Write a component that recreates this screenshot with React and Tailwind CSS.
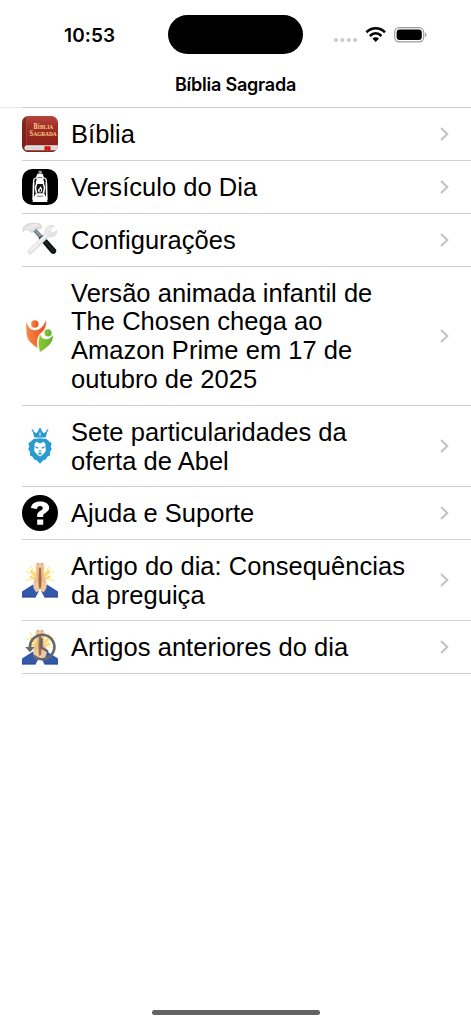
import React from "react";

function BibleIcon() {
  return (
    <svg viewBox="0 0 36 36" className="size-9 overflow-visible">
      <defs>
        <linearGradient id="cover" x1="0" y1="0" x2="0" y2="1">
          <stop offset="0" stopColor="#b5463b" />
          <stop offset="0.3" stopColor="#a02e25" />
          <stop offset="1" stopColor="#861c16" />
        </linearGradient>
        <clipPath id="bookClip"><rect width="36" height="36" rx="6.5" /></clipPath>
      </defs>
      <g clipPath="url(#bookClip)">
        <rect width="36" height="36" fill="url(#cover)" />
        <rect width="4.5" height="36" fill="#702018" opacity="0.65" />
        <path d="M4.5 0v29" stroke="#b65a4d" strokeWidth="0.5" />
        <path d="M5 29.3H36V34.5H5C1.5 34.5 1.5 29.3 5 29.3Z" fill="#e3e3e3" />
        <path d="M4 31.5H36M4 33H36" stroke="#c4c6c7" strokeWidth="0.6" />
        <path d="M22.5 30.2h6v4.8l-3-1.2-3 1.2Z" fill="#d3100d" />
        <path d="M2 35.2H35" stroke="#8b201a" strokeWidth="1.4" />
      </g>
      <g fill="#f6d28b" fontFamily="Liberation Serif, serif" fontWeight="700">
        <text x="11.6" y="13" fontSize="7.4" textLength="19.6" lengthAdjust="spacingAndGlyphs">B<tspan fontSize="6.4">ÍBLIA</tspan></text>
        <text x="7.6" y="20.2" fontSize="7.8" textLength="27" lengthAdjust="spacingAndGlyphs">S<tspan fontSize="6.4">AGRADA</tspan></text>
      </g>
    </svg>
  );
}

function LanternIcon() {
  return (
    <svg viewBox="0 0 36 36" className="size-9">
      <rect width="36" height="36" rx="10.5" />
      <g fill="none" stroke="#fff" strokeLinecap="round">
        <circle cx="18" cy="3.2" r="1.2" strokeWidth="0.8" />
        <path d="M11.6 14 11.2 30M24.4 14 24.8 30" strokeWidth="1.7" />
        <path d="M11.7 14C11 10.5 12.6 9 14.6 8.8M24.3 14C25 10.5 23.4 9 21.4 8.8" strokeWidth="1.3" />
      </g>
      <path d="M15.4 4.8h5.2l1.4 3.4-.8 1.4 1.3 4.4h-9L14.8 9.6l-.8-1.4Z" fill="#fff" />
      <path d="M14.2 13.6h7.6l1.5 5-1 5.8h-8.6l-1-5.8Z" fill="#fff" />
      <path d="M15.3 15h5.4l1.1 4-1.2 5h-5.2l-1.2-5Z" fill="#151515" />
      <path d="M18.3 17.3c2.5 2.2 2.6 5.8-.2 6.2-2.8-.4-2.6-3.2-.6-4.3Z" fill="#fff" />
      <path d="M18.4 19.8c1.2 1.8.6 2.7-.3 2.9-1.2-.5-.7-1.6.3-2.9Z" fill="#000" />
      <path d="M13.8 24.4h8.4l1.5 3 1.6 2v3.6H10.7v-3.6l1.6-2Z" fill="#fff" />
      <path d="M14.8 27.2h6.4M15.6 8.6h4.8" stroke="#333" strokeWidth="0.7" />
    </svg>
  );
}

function ToolsIcon() {
  return (
    <svg viewBox="0 0 36 36" className="size-9">
      <defs>
        <linearGradient id="metal" x1="0" y1="0" x2="1" y2="1">
          <stop offset="0" stopColor="#cfd1d2" />
          <stop offset="0.4" stopColor="#ececed" />
          <stop offset="1" stopColor="#d0d1d2" />
        </linearGradient>
      </defs>
      <path d="M10.5 8 14 6 22.5 16 18.5 18Z" fill="#8795a1" />
      <path d="M11 8.4 19.2 17.6" stroke="#5c6771" strokeWidth="0.9" />
      <path d="M16.6 16.3 21 13 33.8 27.2Q35.4 29.3 33.4 31.3Q31 33 28.8 30.8Z" fill="#111718" />
      <path d="M20.4 16.4 31 28.3" stroke="#3c4042" strokeWidth="0.8" />
      <path d="M.8 6.3C3.8 1.6 9.9.2 17.8 2L20 4.3 18 7.2C15.7 5.7 14.2 6.2 12.8 8.1L9.9 10.8 6.6 7.6C4 6.6 2.6 8 1.4 9.6Z" fill="url(#metal)" stroke="#b4b6b8" strokeWidth="0.5" />
      <path d="M26 4.4C28 3 30.5 3 32.5 4.4L28.6 6 28.4 9.4 31.4 11 34.8 8.2C35.4 12.6 31.4 15.6 26.8 14.8L10.3 31C7.8 33.4 4.3 30.8 6.8 27.9L23 11.8C22.4 8.6 23.6 5.8 26 4.4Z" fill="url(#metal)" stroke="#c9cbcc" strokeWidth="0.5" />
      <path d="M24.3 12.8 8.4 28.9" stroke="#f8f8f8" strokeWidth="1.2" />
    </svg>
  );
}

function FamilyIcon() {
  return (
    <svg viewBox="0 0 36 36" className="size-9">
      <defs>
        <linearGradient id="orange" x1="0" x2="1">
          <stop stopColor="#f58b46" />
          <stop offset="1" stopColor="#e84f1d" />
        </linearGradient>
        <linearGradient id="green" x1="0" x2="1">
          <stop stopColor="#8ac936" />
          <stop offset="1" stopColor="#67ac31" />
        </linearGradient>
      </defs>
      <circle cx="12.8" cy="6" r="3.7" fill="url(#orange)" />
      <path d="M5 3C5.2 8.4 8.4 11.8 12.7 11.9C18 12 21.8 7.9 24 1.4C25.3 8 22.4 12.6 18.6 15.6C15.6 19 14.6 23.3 15.8 30.4C9 26 3.8 21.1 4.4 14.3C4.2 10.6 3.2 6.6 5 3Z" fill="url(#orange)" stroke="#fff" strokeWidth="0.5" />
      <circle cx="26" cy="14.8" r="3.6" fill="url(#green)" />
      <path d="M18.6 15.6C18.4 19.2 21.2 21.2 24.7 21C28.2 20.8 29.6 18.3 31 16.6C32.2 25.5 25.4 28.9 18.1 34.5C15.7 28.3 15.8 20.6 18.6 15.6Z" fill="url(#green)" stroke="#fff" strokeWidth="0.5" />
    </svg>
  );
}

function LionIcon() {
  return (
    <svg viewBox="0 0 36 36" className="size-9">
      <g fill="#299bd0">
        <path d="M10.7 2.7 14.4 5.2 18 .6 21.6 5.2 25.3 2.7 23.8 9.4H12.2Z" />
        <circle cx="10.6" cy="2.6" r="1" /><circle cx="18" cy="1.2" r="1.2" /><circle cx="25.4" cy="2.6" r="1" />
        <path d="M11.5 11 18 10.2 24.5 11 27.3 13.4 29.7 15.4 28.7 18.4 29.8 21.5 28.2 23.2 28 27.4 25.6 28.6 24 31.3 21 32.6 18 35.8 15 32.6 12 31.3 10.4 28.6 8 27.4 7.8 23.2 6.2 21.5 7.3 18.4 6.3 15.4 8.7 13.4Z" />
      </g>
      <path d="M12.6 15.6 15 13.8 17 15.6 18 14.6 19 15.6 21 13.8 23.4 15.6 23.4 18.5 24 22.6 21.3 26.2 18 28.4 14.7 26.2 12 22.6 12.6 18.5Z" fill="#fff" />
      <path d="M13.2 18.2 16.6 19.6 16 20.7 13.6 19.8ZM22.8 18.2 19.4 19.6 20 20.7 22.4 19.8ZM16.3 22.6h3.4L18 24.6ZM15.4 25.6 18 24.8 20.6 25.6 18 27Z" fill="#299bd0" />
      <path d="M18 4.6v3.2" stroke="#fff" strokeWidth="1" />
    </svg>
  );
}

function HelpIcon() {
  return (
    <svg viewBox="0 0 36 36" className="size-9">
      <circle cx="18" cy="18" r="18" />
      <path d="M9 13C9.4 8.8 12.8 6.6 18.2 6.6C23.8 6.6 27.2 9.2 27.2 12.9C27.2 17.2 21.2 18 21.2 20.5V22H15.2V20C15.2 16.2 20.8 15.6 20.8 13.2C20.8 11.9 19.6 11.1 18.1 11.1C16.2 11.1 15.2 12.2 15 13.9ZM15.2 24.4h6v5.3h-6Z" fill="#fff" />
    </svg>
  );
}

function Prayer() {
  return (
    <g>
      <path d="M4.6 9.4 12 14M8.4 3.8 13.4 11M13.2 3.4 15 9M22.8 3.4 21 9M27.6 3.8 22.6 11M31.4 9.4 24 14M31.6 18.6 25 17M4.4 18.6 11 17" stroke="#ffeaa6" strokeWidth="1.4" strokeLinecap="round" />
      <path d="M9 9 12.8 13.2M27 9 23.2 13.2M8.6 15 12 16M27.4 15 24 16" stroke="#ffd54f" strokeWidth="2" strokeLinecap="round" />
      <path d="M0 29.4 11 22.6 16.8 29.6 13.4 35.6H0ZM36 29.4 25 22.6 19.2 29.6 22.6 35.6H36Z" fill="#3458aa" />
      <path d="M0 34.8H13.8M36 34.8H22.2" stroke="#2b4a95" strokeWidth="1" />
      <path d="M14.3 2.4C14.4.4 16.8.2 17.7 1.4L18 2 18.3 1.4C19.2.2 21.6.4 21.7 2.4L22.2 11.7 24.3 18.2C25.3 22.6 25 27.2 21.2 30.6L18 27 14.8 30.6C11 27.2 10.7 22.6 11.7 18.2L13.8 11.7Z" fill="#edc99d" />
      <path d="M17 6.4C17.4 5.2 18.6 5.2 19 6.4L19.6 18 19.1 25 18 27.6 16.9 25 16.4 18Z" fill="#a9683f" />
      <path d="M15.6 3.6V14L13.8 21M20.4 3.6V14L22.2 21" stroke="#dcaa7a" strokeWidth="0.7" fill="none" />
      <path d="M14.8 2.2c.8-.9 2-.8 2.4.2M18.8 2.4c.4-1 1.6-1.1 2.4-.2" stroke="#b67d5c" strokeWidth="0.8" fill="none" />
    </g>
  );
}

function PrayerIcon() {
  return <svg viewBox="0 0 36 36" className="size-9"><Prayer /></svg>;
}

function HistoryIcon() {
  return (
    <svg viewBox="0 0 36 36" className="size-9">
      <Prayer />
      <path d="M8 18.6A12.2 12.2 0 1 1 12.2 27.2" fill="none" stroke="#66686b" strokeWidth="2.6" strokeLinecap="round" />
      <path d="M3.2 18H12.6L8 23.2Z" fill="#66686b" />
      <path d="M19.4 10.4V18.6L25.2 22" fill="none" stroke="#66686b" strokeWidth="2.6" strokeLinecap="round" />
    </svg>
  );
}

const rows = [
  { icon: BibleIcon, lines: ["Bíblia"], height: "h-[53px]" },
  { icon: LanternIcon, lines: ["Versículo do Dia"], height: "h-[53px]" },
  { icon: ToolsIcon, lines: ["Configurações"], height: "h-[53px]" },
  { icon: FamilyIcon, lines: ["Versão animada infantil de", "The Chosen chega ao", "Amazon Prime em 17 de", "outubro de 2025"], height: "h-[139px]" },
  { icon: LionIcon, lines: ["Sete particularidades da", "oferta de Abel"], height: "h-[81px]", offset: "pt-px" },
  { icon: HelpIcon, lines: ["Ajuda e Suporte"], height: "h-[53px]" },
  { icon: PrayerIcon, lines: ["Artigo do dia: Consequências", "da preguiça"], height: "h-[81px]", offset: "pt-px" },
  { icon: HistoryIcon, lines: ["Artigos anteriores do dia"], height: "h-[53px]" },
];

function StatusIcons() {
  return (
    <svg width="94" height="20" viewBox="0 0 94 20">
      <g fill="#ccc"><circle cx="3" cy="15" r="2.1" /><circle cx="9.4" cy="15" r="2.1" /><circle cx="15.8" cy="15" r="2.1" /><circle cx="22.2" cy="15" r="2.1" /></g>
      <g fill="none" stroke="#000" strokeWidth="2.6">
        <path d="M33.4 7.2C38.8 1.9 46.6 1.9 52 7.2" />
        <path d="M36.9 11C40.5 7.5 44.9 7.5 48.5 11" />
      </g>
      <path d="M39.4 13.6c1.9-1.8 4.7-1.8 6.6 0l-3.3 3.3Z" />
      <rect x="61.7" y="2.6" width="29" height="14.3" rx="4.6" fill="none" stroke="#999" strokeWidth="1.1" />
      <rect x="63.6" y="4.5" width="25.2" height="10.5" rx="3" />
      <path d="M92.1 7.4c1.8.7 1.8 4 0 4.7Z" fill="#999" />
    </svg>
  );
}

export default function App() {
  return (
    <main className="flex h-[1024px] w-[471px] flex-col overflow-hidden bg-white font-['Liberation_Sans',sans-serif] text-black">
      <header className="flex h-[107px] shrink-0 flex-col font-['Inter',sans-serif]">
        <div className="flex h-[69px] items-center">
          <time className="ml-[64px] w-[104px] pt-0.5 text-[19px] leading-none font-semibold tracking-[0.1px]">10:53</time>
          <div className="h-[39px] w-[135px] rounded-full bg-black" />
          <div className="ml-[30px]"><StatusIcons /></div>
        </div>
        <h1 className="pt-1 text-center text-[18px] leading-6 font-semibold tracking-[-0.22px]">Bíblia Sagrada</h1>
      </header>
      <div className="flex h-px shrink-0">
        <div className="w-[22px] bg-[#e9e9e9]" />
        <div className="flex-1 bg-[#cfcfcf]" />
      </div>
      <ul>
        {rows.map(({ icon: Icon, lines, height, offset = "" }) => (
          <li key={lines[0]} className={`${height} flex pl-[22px]`}>
            <div className="flex flex-1 items-center border-b border-[#d1d1d1]">
              <div className="w-[49px] shrink-0"><Icon /></div>
              <p className={`${offset} flex-1 text-[25.5px] leading-[28.75px] tracking-[0.03px] whitespace-nowrap`}>
                {lines.map((line) => <span key={line} className="block">{line}</span>)}
              </p>
              <svg viewBox="0 0 9 14" className="mr-[22px] h-[14px] w-[9px]" fill="none" stroke="#c2c2c4" strokeWidth="2"><path d="m1 1 6.3 6L1 13" /></svg>
            </div>
          </li>
        ))}
      </ul>
      <footer className="mt-auto flex justify-center pb-[9px]">
        <div className="h-[5px] w-[168px] rounded-full bg-[#626463]" />
      </footer>
    </main>
  );
}
